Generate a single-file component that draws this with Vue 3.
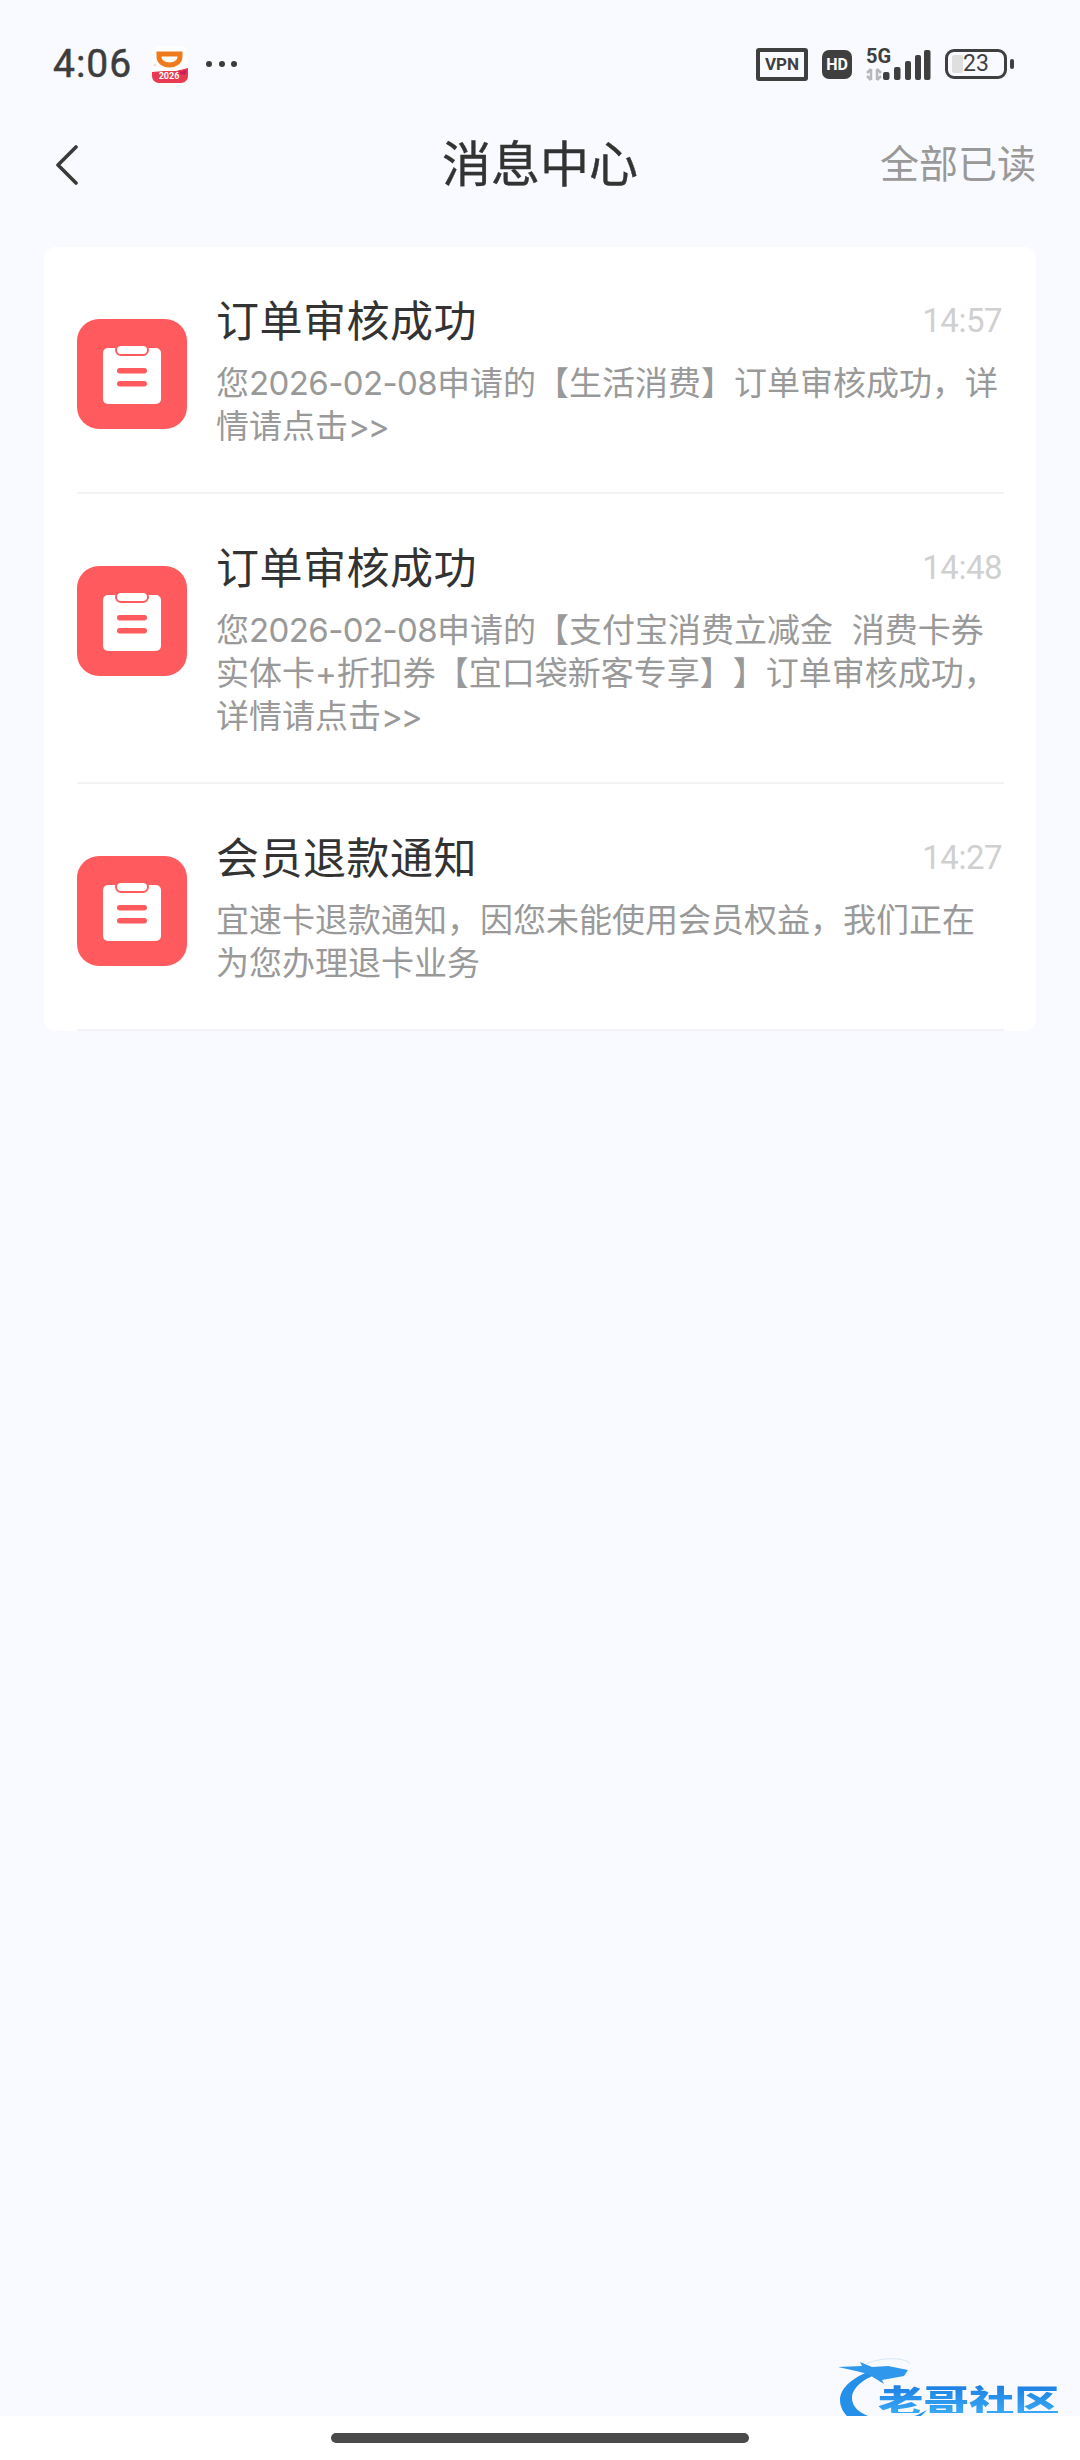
<script setup>
const raw = [
  { title: '订单审核成功', time: '14:57', lines: ['您2026-02-08申请的【生活消费】订单审核成功，详', '情请点击>>'] },
  { title: '订单审核成功', time: '14:48', lines: ['您2026-02-08申请的【支付宝消费立减金  消费卡券', '实体卡+折扣券【宜口袋新客专享】】订单审核成功，', '详情请点击>>'] },
  { title: '会员退款通知', time: '14:27', lines: ['宜速卡退款通知，因您未能使用会员权益，我们正在', '为您办理退卡业务'] }
]
const kindOf = (part) => (/^\d/.test(part) ? 'num' : part.startsWith('>') ? 'arrow' : '')
const items = raw.map((item) => ({
  ...item,
  lines: item.lines.map((line) =>
    line.split(/(\d[\d-]*|>+)/).filter(Boolean).map((text) => ({ text, kind: kindOf(text) }))
  )
}))
</script>

<template>
  <div class="page">
    <div class="status">
      <div class="status-left">
        <span class="clock">4:06</span>
        <svg class="didi" width="36" height="37" viewBox="0 0 36 37">
          <rect width="36" height="37" rx="8" fill="#fff" />
          <path d="M7 8h21v3a10.500 8 0 0 1-21 0z" fill="none" stroke="#ee7a1c" stroke-width="5" />
          <circle cx="3" cy="19" r="1.500" fill="#f6dcd6" />
          <path d="M0 26l12-1h12l12-3v8a7 7 0 0 1-7 7H7a7 7 0 0 1-7-7z" fill="#e83a50" />
          <path d="M27 24l3 2 2-2 3 1-2 4-5-1z" fill="#c9205e" />
          <text x="17" y="33" text-anchor="middle" class="didi-year">2026</text>
        </svg>
        <span class="dots"><i></i><i></i><i></i></span>
      </div>
      <div class="status-right">
        <span class="vpn">VPN</span>
        <span class="hd">HD</span>
        <div class="net">
          <span class="five">5G</span>
          <svg width="65" height="32" viewBox="0 0 65 32">
            <path d="M5 20v11M1 27l4 4M5 20l-4 4" stroke="#b8b8b8" stroke-width="2.500" fill="none" />
            <path d="M11 31V20M15 24l-4-4M11 31l4-4" stroke="#b8b8b8" stroke-width="2.500" fill="none" />
            <rect x="17" y="23" width="6.500" height="8" rx="2" fill="#3f3f3f" />
            <rect x="28" y="18" width="6.500" height="13" rx="2" fill="#3f3f3f" />
            <rect x="39" y="12" width="6" height="19" rx="2" fill="#3f3f3f" />
            <rect x="49" y="6" width="6" height="25" rx="2" fill="#3f3f3f" />
            <rect x="58" y="1" width="6.500" height="30" rx="2" fill="#3f3f3f" />
          </svg>
        </div>
        <div class="battery">
          <div class="cell"><i class="level"></i><span>23</span></div>
          <i class="tip"></i>
        </div>
      </div>
    </div>

    <header class="nav">
      <svg class="back" width="24" height="40" viewBox="0 0 24 40">
        <path d="M21 2L3 20l18 18" fill="none" stroke="#3a3a3a" stroke-width="3.600" stroke-linecap="round" stroke-linejoin="round" />
      </svg>
      <h1>消息中心</h1>
      <span class="read-all">全部已读</span>
    </header>

    <section class="card">
      <article v-for="item in items" :key="item.time" class="row">
        <div class="badge">
          <svg width="58" height="60" viewBox="0 0 58 60">
            <rect x="0" y="4" width="58" height="56" rx="5" fill="#fff" />
            <rect x="13" y="1" width="32" height="10" rx="5" fill="#fff" stroke="#ff5a5d" stroke-width="2" />
            <rect x="14" y="24" width="30" height="5.500" rx="2.700" fill="#ff5a5d" />
            <rect x="14" y="37" width="30" height="5.500" rx="2.700" fill="#ff5a5d" />
          </svg>
        </div>
        <div class="body">
          <div class="head">
            <h2>{{ item.title }}</h2>
            <time>{{ item.time }}</time>
          </div>
          <p v-for="(line, i) in item.lines" :key="i"><span v-for="(part, j) in line" :key="j" :class="part.kind">{{ part.text }}</span></p>
        </div>
      </article>
    </section>

    <div class="mark">
      <svg class="dragon" width="92" height="76" viewBox="0 0 92 76">
        <path d="M40 10C15 18 2 30 2 42C2 62 30 74 52 72C68 70 80 62 89 52C75 60 62 64 48 62C28 60 14 52 14 40C14 28 30 18 46 14Z" fill="#2490ea" />
        <path d="M0 9L24 8L22 4L34 9L50 8L70 12L66 18L44 22L46 26L30 16L18 13Z" fill="#2f98ec" />
        <path d="M28 6C45 -2 70 0 72 6" fill="none" stroke="#d6e6f6" stroke-width="1" />
      </svg>
      <span class="mark-title">老哥社区</span>
      <span class="mark-sub">LAOGESHEQU</span>
    </div>

    <div class="home"><i></i></div>
  </div>
</template>

<style>
html, body { margin: 0; background: #f9faff; }
</style>

<style scoped>
.page {
  position: relative;
  width: 1080px;
  height: 2460px;
  overflow: hidden;
  display: flex;
  flex-direction: column;
  background: #f9faff;
  font-family: "Noto Sans CJK SC", "Noto Sans", sans-serif;
}
.status {
  height: 128px;
  box-sizing: border-box;
  padding: 44px 66px 0 53px;
  display: flex;
  justify-content: space-between;
  align-items: flex-start;
}
.status-left { display: flex; align-items: center; height: 40px; }
.clock { font: 400 39px/40px Roboto, sans-serif; color: #3d3d3d; letter-spacing: 1px; -webkit-text-stroke: 0.5px #3d3d3d; }
.didi { margin-left: 20px; }
.didi-year { font: 700 9px Roboto, sans-serif; fill: #fff; }
.dots { display: flex; gap: 6.500px; margin-left: 18px; }
.dots i { width: 6px; height: 6px; border-radius: 50%; background: #3d3d3d; }
.status-right { display: flex; align-items: center; height: 36px; margin-top: 2px; }
.vpn {
  width: 52px; height: 33px; box-sizing: border-box;
  border: 4px solid #3f3f3f; border-radius: 3px;
  font: 700 17px/25px Roboto, sans-serif; color: #3f3f3f; text-align: center;
}
.hd {
  width: 30px; height: 29px; margin-left: 14px; border-radius: 7px;
  background: #3f3f3f; color: #fff;
  font: 700 16px/29px Roboto, sans-serif; text-align: center;
}
.net { position: relative; width: 65px; height: 32px; margin-left: 14px; margin-top: 1px; }
.net svg { position: absolute; left: 0; top: 0; }
.five { position: absolute; left: 0; top: -3px; font: 700 20px/20px Roboto, sans-serif; color: #3f3f3f; }
.battery { display: flex; align-items: center; margin-left: 14px; }
.cell {
  position: relative; width: 62px; height: 30px; box-sizing: border-box;
  border: 3px solid #3f3f3f; border-radius: 9px;
  font: 400 23px/24px Roboto, sans-serif; color: #3f3f3f;
}
.cell span { position: absolute; left: 15px; top: 0; }
.level { position: absolute; left: 4px; top: 3px; width: 11px; height: 18px; border-radius: 2px; background: #dedede; }
.tip { width: 4px; height: 10px; margin-left: 3px; border-radius: 2px; background: #3f3f3f; }

.nav {
  position: relative;
  height: 72px;
  box-sizing: border-box;
  display: flex;
  align-items: center;
  justify-content: space-between;
  padding: 0 44px 0 55px;
}
.back { margin-top: 2px; }
.nav h1 {
  position: absolute; left: 0; right: 0; top: 0; margin: 0;
  text-align: center;
  font-size: 49px; font-weight: 400; color: #333;
  line-height: 66px;
  -webkit-text-stroke: 0.4px #333;
  pointer-events: none;
}
.read-all { font-size: 39px; color: #999; line-height: 66px; margin-bottom: 6px; }

.card {
  margin: 47px 44px 0;
  background: #fff;
  border-radius: 12px;
  overflow: hidden;
}
.row {
  display: flex;
  align-items: flex-start;
  margin: 0 32px 0 33px;
  padding-bottom: 44px;
  border-bottom: 2px solid #f2f3f5;
}
.badge {
  flex: none;
  width: 110px; height: 110px;
  margin-top: 72px;
  border-radius: 22px;
  background: #ff5a5d;
  display: flex; align-items: center; justify-content: center;
}
.body { flex: 1; min-width: 0; margin-left: 29px; margin-top: 40px; }
.head { display: flex; justify-content: space-between; align-items: center; height: 62px; margin-bottom: 13px; }
.head h2 { margin: 0; font-size: 43px; font-weight: 400; color: #333; letter-spacing: 0.5px; line-height: 62px; }
.head time { font: 400 33px/40px Roboto, sans-serif; color: #d0d0d0; margin: 6px 2px 0 0; letter-spacing: -0.5px; }
.body p {
  margin: 0;
  font-family: Inter, "Noto Sans CJK SC", sans-serif;
  font-size: 33px; line-height: 43px; color: #999; white-space: pre;
  text-spacing-trim: space-all;
}
.num { letter-spacing: -0.6px; }
.arrow { letter-spacing: -2px; }

.mark { position: absolute; left: 838px; top: 2358px; width: 230px; height: 76px; }
.dragon { position: absolute; left: 0; top: 0; }
.mark-title {
  position: absolute; left: 40px; top: 27px;
  font-size: 32px; font-weight: 900; line-height: 28px; white-space: nowrap;
  transform: scaleX(1.42);
  transform-origin: left center;
  background: linear-gradient(#1d7fe2, #38a9f6);
  -webkit-background-clip: text;
  background-clip: text;
  color: transparent;
}
.mark-sub {
  position: absolute; left: 92px; top: 57px;
  font: 700 9px/10px Roboto, sans-serif; letter-spacing: 5px; color: #5aa9ee; white-space: nowrap;
}
.home {
  position: absolute; left: 0; right: 0; bottom: 0; height: 44px;
  background: #fff;
}
.home i {
  position: absolute; left: 331px; top: 17px; width: 418px; height: 10px;
  border-radius: 5px; background: #4a4a4a;
}
</style>
